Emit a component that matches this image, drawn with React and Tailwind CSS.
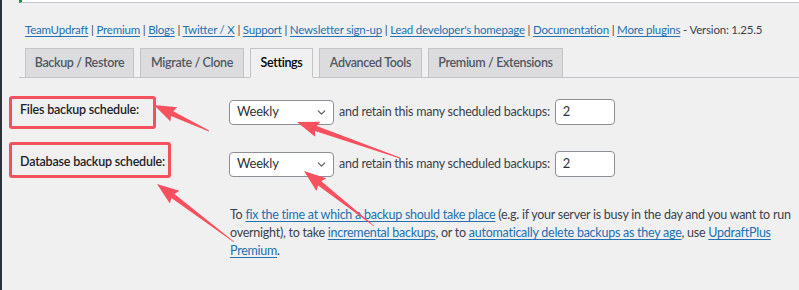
import React from "react";
import { ChevronDown } from "lucide-react";

const font = { fontFamily: "Lato, 'Liberation Sans', sans-serif" };

const links = [
  "TeamUpdraft",
  "Premium",
  "Blogs",
  "Twitter / X",
  "Support",
  "Newsletter sign-up",
  "Lead developer's homepage",
  "Documentation",
  "More plugins",
];

const tabs = [
  { label: "Backup / Restore", w: "w-[109px]" },
  { label: "Migrate / Clone", w: "w-[104px]" },
  { label: "Settings", w: "w-[63px]", active: true },
  { label: "Advanced Tools", w: "w-[103px]" },
  { label: "Premium / Extensions", w: "w-[135px]" },
];

// tapered annotation arrow from tail to tip
function arrowPoints([tx, ty], [px, py]) {
  const dx = px - tx;
  const dy = py - ty;
  const len = Math.hypot(dx, dy);
  const ux = dx / len;
  const uy = dy / len;
  const nx = -uy;
  const ny = ux;
  const headLen = 20;
  const headW = 8;
  const shaftW = 2.6;
  const bx = px - ux * headLen;
  const by = py - uy * headLen;
  const pts = [
    [tx + nx * 0.4, ty + ny * 0.4],
    [bx + nx * shaftW, by + ny * shaftW],
    [bx + nx * headW - ux * 2, by + ny * headW - uy * 2],
    [px, py],
    [bx - nx * headW - ux * 2, by - ny * headW - uy * 2],
    [bx - nx * shaftW, by - ny * shaftW],
    [tx - nx * 0.4, ty - ny * 0.4],
  ];
  return pts.map((p) => p.map((v) => v.toFixed(1)).join(",")).join(" ");
}

const arrows = [
  [[207, 131], [152, 105]],
  [[398, 158], [295, 122]],
  [[372, 226], [302, 171]],
  [[232, 242], [155, 184]],
];

function Select() {
  return (
    <div className="flex items-center justify-between w-[105px] h-[25px] pl-[7px] pr-[5px] bg-white border border-[#8c8f94] rounded-[4px] text-[13px] tracking-[-0.2px] text-[#2c3338]">
      <span>Weekly</span>
      <ChevronDown size={13} strokeWidth={2} className="text-[#50575e]" />
    </div>
  );
}

function Row({ label }) {
  return (
    <div className="flex items-center h-[52px]">
      <div className="w-[227px] pl-[18px] pb-[4px] text-[12.5px] tracking-[-0.2px] font-semibold text-[#1d2327]">
        {label}
      </div>
      <Select />
      <span className="ml-[5px] text-[12.5px] tracking-[-0.25px] text-[#3c434a]">
        and retain this many scheduled backups:
      </span>
      <div className="ml-[5px] w-[60px] h-[26px] pl-[7px] flex items-center bg-white border border-[#8c8f94] rounded-[4px] text-[13px] text-[#2c3338]">
        2
      </div>
    </div>
  );
}

function A({ children }) {
  return <a className="text-[#2271b1] underline underline-offset-2">{children}</a>;
}

export default function App() {
  return (
    <div
      className="relative w-[799px] h-[290px] overflow-hidden bg-[#f0f0f1] border-l-2 border-[#2c3338]"
      style={font}
    >
      <div className="ml-[17px] h-[3px] bg-white border-l-[3px] border-l-[#00a32a] border-b border-b-[#c3c4c7]" />

      <div className="mt-[19px] pl-[23px] text-[11.5px] tracking-[-0.2px] leading-[16px] text-[#3c434a] whitespace-nowrap">
        {links.map((l, i) => (
          <React.Fragment key={l}>
            {i > 0 && " | "}
            <A>{l}</A>
          </React.Fragment>
        ))}
        {" - Version: 1.25.5"}
      </div>

      <div className="mt-[10px] ml-[17px] flex gap-[6px] pl-[6px] border-b border-[#c3c4c7]">
        {tabs.map((t) => (
          <div
            key={t.label}
            className={`${t.w} h-[30px] -mb-px flex items-center justify-center border border-[#c3c4c7] text-[12.5px] tracking-[-0.35px] font-semibold whitespace-nowrap ${
              t.active
                ? "bg-[#f0f0f1] border-b-[#f0f0f1] text-black"
                : "bg-[#dcdcde] text-[#50575e]"
            }`}
          >
            {t.label}
          </div>
        ))}
      </div>

      <div className="mt-[8px]">
        <Row label="Files backup schedule:" />
        <Row label="Database backup schedule:" />
      </div>

      <p className="mt-[16px] ml-[228px] w-[566px] text-[12.5px] tracking-[-0.25px] leading-[18px] text-[#3c434a]">
        To <A>fix the time at which a backup should take place</A> (e.g. if your server is busy in
        the day and you want to run
        <br />
        overnight), to take <A>incremental backups</A>, or to{" "}
        <A>automatically delete backups as they age</A>, use <A>UpdraftPlus</A>
        <br />
        <A>Premium</A>.
      </p>

      <div className="absolute left-[7px] top-[96px] w-[147px] h-[33px] border-[3px] border-[#f4515f] rounded-[3px]" />
      <div className="absolute left-[7px] top-[142px] w-[162px] h-[36px] border-[3px] border-[#f4515f] rounded-[3px]" />

      <svg className="absolute inset-0 pointer-events-none" width="799" height="290">
        {arrows.map(([tail, tip], i) => (
          <polygon key={i} points={arrowPoints(tail, tip)} fill="#f7505f" />
        ))}
      </svg>
    </div>
  );
}
